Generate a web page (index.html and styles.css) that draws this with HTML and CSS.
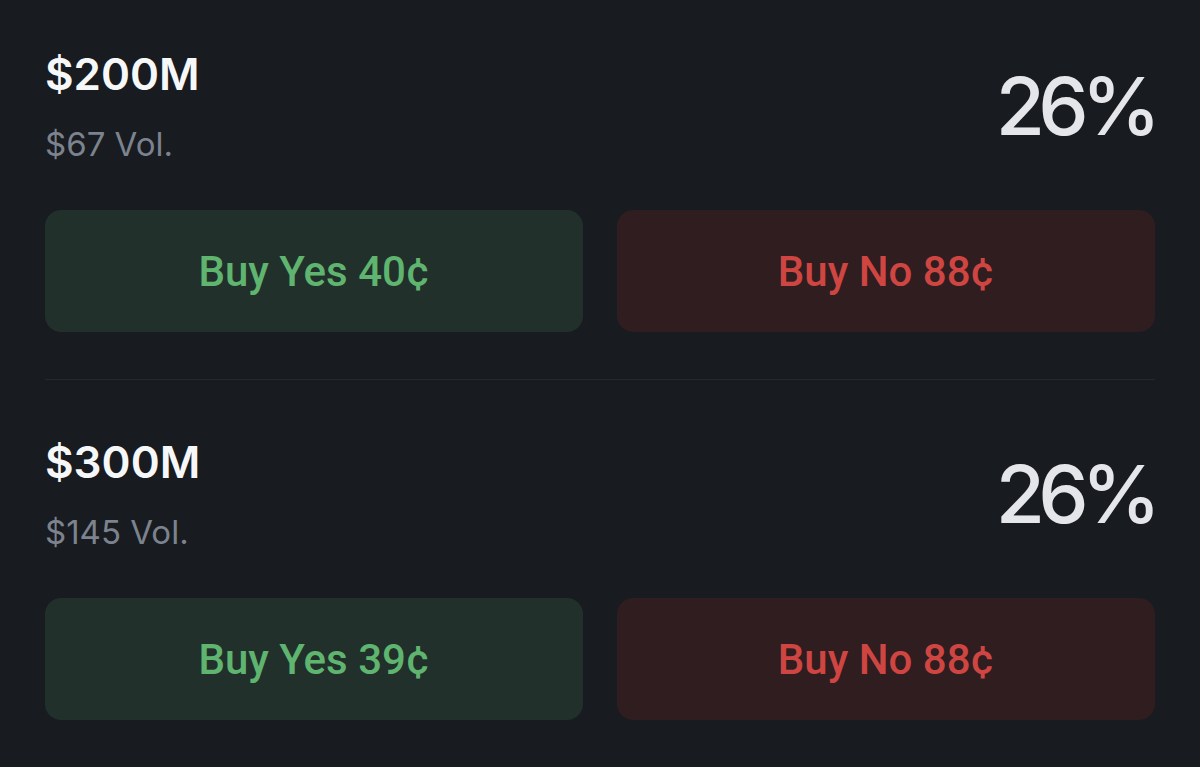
FILE: index.html
```html
<!DOCTYPE html>
<html>
<head>
<meta charset="utf-8">
<link rel="stylesheet" href="styles.css">
</head>
<body>
<div class="list">
  <div class="item">
    <div class="head">
      <div class="info">
        <div class="title">$200M</div>
        <div class="vol">$67 Vol.</div>
      </div>
      <div class="pct">26%</div>
    </div>
    <div class="btns">
      <button class="btn yes">Buy Yes 40¢</button>
      <button class="btn no">Buy No 88¢</button>
    </div>
  </div>
  <div class="item">
    <div class="head">
      <div class="info">
        <div class="title">$300M</div>
        <div class="vol">$145 Vol.</div>
      </div>
      <div class="pct">26%</div>
    </div>
    <div class="btns">
      <button class="btn yes">Buy Yes 39¢</button>
      <button class="btn no">Buy No 88¢</button>
    </div>
  </div>
</div>
</body>
</html>
```
FILE: styles.css
```css
html, body {
  margin: 0;
  padding: 0;
  background: #181b20;
  height: 100%;
  overflow: hidden;
}
body {
  font-family: Inter, "Noto Sans", sans-serif;
}
.list {
  margin: -8px 45px 0 45px;
}
.item {
  padding: 56px 0 47px;
  border-bottom: 1px solid #262a30;
}
.head {
  display: flex;
  justify-content: space-between;
  align-items: center;
}
.title {
  font-size: 44px;
  line-height: 52px;
  font-weight: 600;
  color: #f6f7f8;
}
.vol {
  margin-top: 24px;
  font-size: 33px;
  line-height: 40px;
  font-weight: 400;
  color: #7c838e;
}
.pct {
  font-size: 80px;
  line-height: 90px;
  font-weight: 500;
  color: #e4e6ea;
  margin-right: 1px;
  letter-spacing: -7px;
}
.btns {
  margin-top: 46px;
  display: grid;
  grid-template-columns: 1fr 1fr;
  gap: 34px;
}
.btn {
  height: 122px;
  border: none;
  border-radius: 16px;
  font-family: Roboto, Inter, sans-serif;
  font-size: 42px;
  font-weight: 500;
  padding: 0;
}
.yes {
  background: #22302b;
  color: #5fb46f;
}
.no {
  background: #2f1d20;
  color: #cf4541;
}
```
